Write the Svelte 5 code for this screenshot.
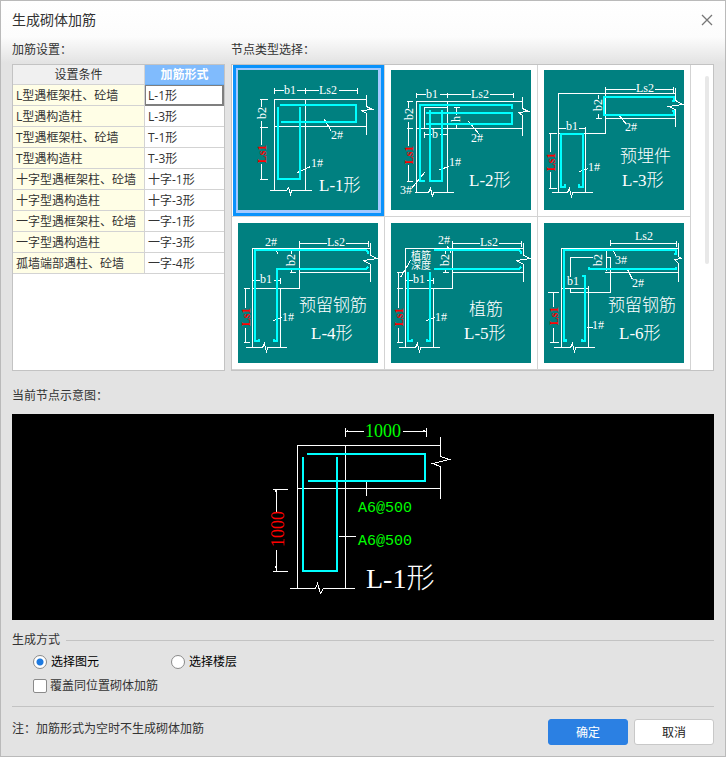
<script>
  const rules = [
    ['L型遇框架柱、砼墙', 'L-1形'],
    ['L型遇构造柱', 'L-3形'],
    ['T型遇框架柱、砼墙', 'T-1形'],
    ['T型遇构造柱', 'T-3形'],
    ['十字型遇框架柱、砼墙', '十字-1形'],
    ['十字型遇构造柱', '十字-3形'],
    ['一字型遇框架柱、砼墙', '一字-1形'],
    ['一字型遇构造柱', '一字-3形'],
    ['孤墙端部遇柱、砼墙', '一字-4形']
  ];

  // thin: wall outlines and dimensions, bars: reinforcement,
  // labels: [text, x, baseline, kind]; kind v/red runs upwards around its centre
  const nodes = [
    {
      name: 'L-1形',
      thin: 'M36 17V23M67 17V23M119 17V23M36 20H45M58 20H80M100 20H119M36 120V29H128M67 29V120M36 56H128M128 24V36L134 39L123 40L128 43V64M31 120H48L50 117L52 124L53 120H73M21 29H29M21 57H29M21 109H29M23 29V36M23 50V74M23 93V109M86 49L93 61M59 102L72 96',
      bars: 'M42 35H118V52H43M40 37V109H62V37',
      labels: [['b1', 46, 24, ''], ['Ls2', 81, 24, ''], ['b2', 28, 43, 'v'], ['Ls1', 28, 84, 'red'], ['2#', 93, 69, ''], ['1#', 73, 97, ''], ['L-1形', 81, 121, 'title']]
    },
    {
      name: 'L-2形',
      thin: 'M25 22V27M56 22V27M122 22V27M25 24H34M48 24H79M98 24H122M25 122V31H131M56 31V122M25 58H131M131 26V38L137 41L127 42L131 45V65M23 122H37L39 118L41 126L42 122H62M33 58V37H56M33 61V67M56 61V67M33 64H40M48 64H56M62 37H68M62 58H68M65 37V44M65 54V58M15 31H21M15 58H21M15 111H21M17 31V37M17 51V75M17 94V111M77 51L88 64M48 99L58 96M33 102L20 118',
      bars: 'M121 39V35H29V111H34M35 43H121V54H35M39 40V111H51V40',
      labels: [['b1', 35, 28, ''], ['Ls2', 80, 28, ''], ['b2', 22, 44, 'v'], ['h', 69, 49, 'v'], ['b', 41, 68, ''], ['Ls1', 22, 85, 'red'], ['2#', 80, 72, ''], ['1#', 58, 96, ''], ['3#', 9, 124, ''], ['L-2形', 78, 116, 'title']]
    },
    {
      name: 'L-3形',
      thin: 'M61 16V22M129 16V22M61 19H91M110 19H129M14 122V23H131M131 17V30L138 34L124 36L131 39V56M61 23V63H14M61 48H131M41 56V122M7 122H23L25 118L27 127L28 122H48M54 24V28M54 43V48M51 48H57M14 58H21M34 58H41M4 63H12M4 118H12M6 63V81M6 101V118M74 44L82 54M35 101L44 98',
      bars: 'M128 31H130V27H60V45H130V41H128M21 114V117H17V64H39V117H35V114',
      labels: [['Ls2', 92, 22, ''], ['b2', 58, 35, 'v'], ['b1', 22, 60, ''], ['Ls1', 11, 92, 'red'], ['2#', 81, 61, ''], ['1#', 44, 101, ''], ['预埋件', 76, 92, 'title'], ['L-3形', 78, 116, 'title']]
    },
    {
      name: 'L-4形',
      thin: 'M61 17V65M130 17V23M61 20H88M107 20H130M14 124V25H132M132 19V32L139 35L125 37L132 41V58M14 65H61M61 49H132M42 54V60M42 65V124M7 124H24L26 120L28 129L29 124H48M53 25V30M53 44V49M51 49H57M14 57H21M35 57H42M5 65H11M5 119H11M7 65V84M7 104V119M36 25L40 31M35 97L44 94',
      bars: 'M130 31V29L128 27H17V118H21V116M130 44L128 46H39V118H36V116',
      labels: [['2#', 27, 23, ''], ['Ls2', 89, 23, ''], ['b2', 57, 37, 'v'], ['b1', 22, 60, ''], ['Ls1', 12, 94, 'red'], ['1#', 44, 98, ''], ['预留钢筋', 61, 88, 'title'], ['L-4形', 73, 116, 'title']]
    },
    {
      name: 'L-5形',
      thin: 'M61 17V65M130 17V23M61 20H88M107 20H130M14 124V25H132M132 19V32L139 35L125 37L132 41V58M14 65H61M61 49H132M42 54V60M42 65V124M7 124H24L26 120L28 129L29 124H48M54 25V30M54 44V49M51 49H57M14 57H21M35 57H42M5 49H11M5 65H11M5 119H11M7 49V84M7 104V119M19 37L9 54M56 23L60 30M35 97L44 94',
      bars: 'M130 31V29L128 27H43M130 44L128 46H43M17 49V118H21V116M39 49V118H36V116',
      labels: [['2#', 47, 21, ''], ['Ls2', 89, 23, ''], ['植筋', 20, 36, 'small'], ['深度', 20, 46, 'small'], ['b2', 58, 37, 'v'], ['b1', 22, 60, ''], ['Ls1', 12, 94, 'red'], ['1#', 44, 98, ''], ['植筋', 78, 92, 'title'], ['L-5形', 73, 116, 'title']]
    },
    {
      name: 'L-6形',
      thin: 'M66 16V22M132 17V23M66 20H132M17 124V25H134M134 19V33L137 35L130 36L134 40V58M60 49H134M26 53V34H48M61 34H66V69H26V65M17 65H44M44 62V124M9 124H26L28 120L30 129L31 124H50M62 27V47M3 69H14M5 119H14M9 69V83M9 104V119M69 28L72 33M83 46L88 56M42 104H48',
      bars: 'M130 31H132V27H20V118H22V116M45 44V46H132V44M38 53H41V118H38V116',
      labels: [['Ls2', 91, 17, ''], ['b2', 58, 37, 'v'], ['b1', 23, 62, ''], ['3#', 71, 41, ''], ['2#', 88, 64, ''], ['Ls1', 14, 93, 'red'], ['1#', 48, 106, ''], ['预留钢筋', 64, 88, 'title'], ['L-6形', 75, 116, 'title']]
    }
  ];

  let picked = $state(0);
  let mode = $state('element');
  let overwrite = $state(false);
</script>

<main class="dialog">
  <header>
    <h1>生成砌体加筋</h1>
    <button class="close" aria-label="关闭">
      <svg width="12" height="12" viewBox="0 0 12 12"><path d="M1 1L11 11M11 1L1 11" stroke="#777" stroke-width="1.3" /></svg>
    </button>
  </header>

  <div class="top">
    <section class="settings">
      <h2>加筋设置：</h2>
      <div class="panel">
        <table>
          <thead>
            <tr><th>设置条件</th><th class="active">加筋形式</th></tr>
          </thead>
          <tbody>
            {#each rules as [condition, shape], i}
              <tr><td>{condition}</td><td class:current={i === 0}>{shape}</td></tr>
            {/each}
          </tbody>
        </table>
      </div>
    </section>

    <section class="types">
      <h2>节点类型选择：</h2>
      <div class="panel gallery">
        <div class="grid">
          {#each nodes as node, i}
            <div class="cell">
              <button class="node" class:selected={picked === i} aria-label={node.name} aria-pressed={picked === i} onclick={() => (picked = i)}>
                <svg class="drawing" width="140" height="140" viewBox="0 0 140 140">
                  <rect width="140" height="140" fill="#008080" />
                  <path class="thin" d={node.thin} transform="translate(.5 .5)" />
                  <path class="bars" d={node.bars} />
                  {#each node.labels as [text, x, y, kind]}
                    <text class={kind} {x} {y} transform={kind === 'v' || kind === 'red' ? `rotate(-90 ${x} ${y})` : null}>{text}</text>
                  {/each}
                </svg>
              </button>
            </div>
          {/each}
        </div>
        <div class="track"><div class="thumb"></div></div>
      </div>
    </section>
  </div>

  <section class="preview">
    <h2>当前节点示意图：</h2>
    <svg class="drawing" width="100%" height="206" viewBox="0 0 702 206">
      <path class="thin" transform="translate(.5 .5)" d="M333 13V22M414 13V22M333 17H351M390 17H414M333 17L336 16M414 17L411 16M285 174V31H428M333 31V174M285 74H428M428 22V42L437 45L420 49L428 52V84M277 174H303L305 169L308 179L311 174H342M260 75H275M260 157H275M264 75V97M264 135V157M264 78L263 76M264 154L263 152M354 67V81M326 122H343" />
      <path class="bars" d="M295 40H413V67H296M291 43V157H325V43" />
      <text class="value" x="353" y="23">1000</text>
      <text class="value turned" x="272" y="115" transform="rotate(-90 272 115)">1000</text>
      <text class="spec" x="346" y="98">A6@500</text>
      <text class="spec" x="346" y="131">A6@500</text>
      <text class="big" x="354" y="174">L-1形</text>
    </svg>
  </section>

  <fieldset>
    <legend>生成方式</legend>
    <div class="modes">
      <label><input type="radio" name="mode" value="element" bind:group={mode} />选择图元</label>
      <label><input type="radio" name="mode" value="floor" bind:group={mode} />选择楼层</label>
    </div>
    <label class="check"><input type="checkbox" bind:checked={overwrite} />覆盖同位置砌体加筋</label>
  </fieldset>

  <footer>
    <p>注：加筋形式为空时不生成砌体加筋</p>
    <button class="ok">确定</button>
    <button class="cancel">取消</button>
  </footer>
</main>

<style>
  .dialog {
    box-sizing: border-box;
    min-height: 100vh;
    padding: 0 11px;
    border: 1px solid #bababa;
    background: linear-gradient(#fff 0, #fcfcfc 36px, #e3e3e3 62px);
    font: 12px/18px "Open Sans", "Noto Sans CJK SC", sans-serif;
    color: #333;
  }
  header {
    display: flex;
    justify-content: space-between;
    align-items: center;
    height: 38px;
  }
  h1, h2, p {
    margin: 0;
    font-weight: 400;
  }
  h1 {
    font-size: 14px;
  }
  h2 {
    font-size: 12px;
    line-height: 18px;
  }
  button {
    font: inherit;
    cursor: pointer;
  }
  .close {
    display: flex;
    padding: 1px;
    border: 0;
    background: none;
  }
  .top {
    display: flex;
    gap: 6px;
  }
  .settings {
    flex: 0 0 213px;
  }
  .types {
    flex: 1;
  }
  .top h2 {
    height: 25px;
    line-height: 22px;
  }
  .panel {
    box-sizing: border-box;
    height: 307px;
    border: 1px solid #c3c3c3;
    background: #fff;
  }
  table {
    width: 100%;
    border-collapse: separate;
    border-spacing: 0;
    table-layout: fixed;
  }
  th, td {
    box-sizing: border-box;
    height: 21px;
    padding: 2px 3px 0;
    border: solid #d3d3d3;
    border-width: 0 1px 1px 0;
    line-height: 18px;
    white-space: nowrap;
  }
  th {
    height: 20px;
    padding-top: 1px;
    background: #f0f0f0;
    font-weight: 400;
  }
  th:first-child {
    width: 132px;
  }
  th:last-child, td:last-child {
    border-right: 0;
  }
  th.active {
    border-color: #6aaef5;
    background: #80bbfd;
    color: #fff;
    font-weight: 700;
  }
  td:first-child {
    background: #fffee6;
  }
  td.current {
    border-bottom-color: #7f7f7f;
    box-shadow: inset 0 0 0 1px #7f7f7f, inset -1px 0 0 1px #7f7f7f;
  }
  .gallery {
    display: flex;
    justify-content: space-between;
  }
  .grid {
    display: grid;
    grid-template-columns: repeat(3, 153px);
    grid-template-rows: 152px 153px;
  }
  .cell {
    display: flex;
    justify-content: flex-end;
    align-items: flex-end;
    border: solid #d3d3d3;
    border-width: 0 1px 1px 0;
  }
  .node {
    display: flex;
    padding: 2px 3px 3px 2px;
    border: 3px solid #fff;
    background: #fff;
  }
  .node.selected {
    border-color: #0a92fb;
    background: #a3c9ff;
  }
  .track {
    padding: 11px 4px 0 0;
  }
  .thumb {
    width: 4px;
    height: 188px;
    border-radius: 2px;
    background: #e8e8e8;
  }
  .drawing {
    display: block;
    font: 12px "Liberation Serif", "Noto Sans CJK SC", serif;
  }
  .drawing path {
    fill: none;
    shape-rendering: crispEdges;
  }
  .thin {
    stroke: #fff;
    stroke-width: 1;
  }
  .bars {
    stroke: #0ff;
    stroke-width: 2;
  }
  .drawing text {
    fill: #fff;
  }
  .drawing .v, .drawing .red, .drawing .turned {
    text-anchor: middle;
  }
  .drawing .red {
    fill: #f00;
    font-weight: 700;
  }
  .drawing .small {
    font-size: 10px;
  }
  .drawing .title {
    font-size: 17px;
    font-weight: 300;
  }
  .drawing .value {
    fill: #0f0;
    font-size: 18px;
  }
  .drawing .turned {
    fill: #f00;
  }
  .drawing .spec {
    fill: #0f0;
    font-family: "Liberation Mono", monospace;
    font-size: 15px;
  }
  .drawing .big {
    font-size: 28px;
    font-weight: 300;
  }
  .preview {
    padding-top: 16px;
  }
  .preview h2 {
    height: 27px;
  }
  .preview .drawing {
    background: #000;
  }
  fieldset {
    margin: 11px 0 0;
    padding: 4px 0 11px 21px;
    border: 0;
    border-top: 1px solid #c3c3c3;
    border-bottom: 1px solid #c3c3c3;
  }
  legend {
    margin-left: -21px;
    padding: 0 6px 0 0;
  }
  .modes {
    display: flex;
    color: #000;
  }
  label {
    display: flex;
    align-items: center;
    gap: 4px;
  }
  .modes label {
    width: 138px;
    height: 18px;
  }
  .check {
    width: fit-content;
    height: 18px;
    margin-top: 6px;
    gap: 3px;
  }
  input {
    appearance: none;
    box-sizing: border-box;
    width: 14px;
    height: 14px;
    margin: 0;
    border: 1px solid #8a8a8a;
    border-radius: 2px;
    background: #fff;
  }
  input[type="radio"] {
    border-radius: 50%;
  }
  input[type="radio"]:checked {
    background: radial-gradient(circle, #1e7ae0 3px, #fff 4px);
  }
  input[type="checkbox"]:checked {
    background: #2b80e3;
  }
  footer {
    display: flex;
    align-items: center;
    gap: 6px;
    padding: 12px 0 11px;
  }
  footer p {
    flex: 1;
    margin-bottom: 6px;
  }
  footer button {
    width: 80px;
    height: 26px;
    padding: 2px 0 0;
    border-radius: 3px;
  }
  .ok {
    border: 1px solid #2b80e3;
    background: #2b80e3;
    color: #fff;
  }
  .cancel {
    border: 1px solid #c8c8c8;
    background: #fff;
    color: #222;
  }
</style>
